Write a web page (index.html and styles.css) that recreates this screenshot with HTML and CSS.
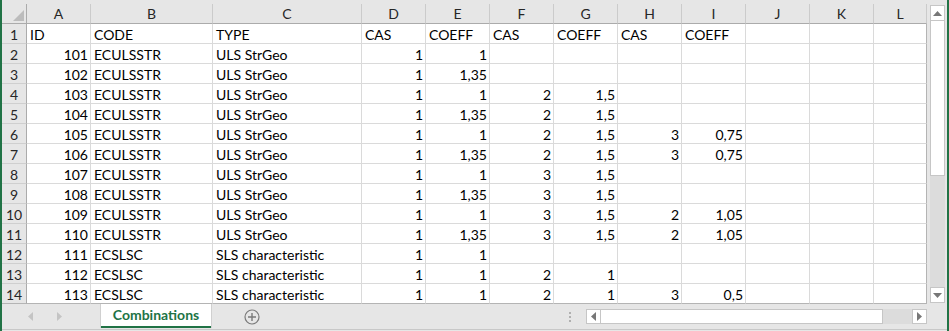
FILE: index.html
```html
<!DOCTYPE html>
<html>
<head>
    <title>Combinations</title>
    <link rel="stylesheet" href="styles.css">
</head>
<body>
<div class="app">
    <div class="main">
        <div class="sheet">
            <div class="row head">
                <div class="corner"><span class="tri"></span></div>
                <div>A</div><div>B</div><div>C</div><div>D</div><div>E</div><div>F</div>
                <div>G</div><div>H</div><div>I</div><div>J</div><div>K</div><div>L</div>
            </div>
            <div class="row"><div class="rh">1</div><div>ID</div><div>CODE</div><div>TYPE</div><div>CAS</div><div>COEFF</div><div>CAS</div><div>COEFF</div><div>CAS</div><div>COEFF</div><div></div><div></div><div></div></div>
            <div class="row"><div class="rh">2</div><div class="n">101</div><div>ECULSSTR</div><div>ULS StrGeo</div><div class="n">1</div><div class="n">1</div><div></div><div></div><div></div><div></div><div></div><div></div><div></div></div>
            <div class="row"><div class="rh">3</div><div class="n">102</div><div>ECULSSTR</div><div>ULS StrGeo</div><div class="n">1</div><div class="n">1,35</div><div></div><div></div><div></div><div></div><div></div><div></div><div></div></div>
            <div class="row"><div class="rh">4</div><div class="n">103</div><div>ECULSSTR</div><div>ULS StrGeo</div><div class="n">1</div><div class="n">1</div><div class="n">2</div><div class="n">1,5</div><div></div><div></div><div></div><div></div><div></div></div>
            <div class="row"><div class="rh">5</div><div class="n">104</div><div>ECULSSTR</div><div>ULS StrGeo</div><div class="n">1</div><div class="n">1,35</div><div class="n">2</div><div class="n">1,5</div><div></div><div></div><div></div><div></div><div></div></div>
            <div class="row"><div class="rh">6</div><div class="n">105</div><div>ECULSSTR</div><div>ULS StrGeo</div><div class="n">1</div><div class="n">1</div><div class="n">2</div><div class="n">1,5</div><div class="n">3</div><div class="n">0,75</div><div></div><div></div><div></div></div>
            <div class="row"><div class="rh">7</div><div class="n">106</div><div>ECULSSTR</div><div>ULS StrGeo</div><div class="n">1</div><div class="n">1,35</div><div class="n">2</div><div class="n">1,5</div><div class="n">3</div><div class="n">0,75</div><div></div><div></div><div></div></div>
            <div class="row"><div class="rh">8</div><div class="n">107</div><div>ECULSSTR</div><div>ULS StrGeo</div><div class="n">1</div><div class="n">1</div><div class="n">3</div><div class="n">1,5</div><div></div><div></div><div></div><div></div><div></div></div>
            <div class="row"><div class="rh">9</div><div class="n">108</div><div>ECULSSTR</div><div>ULS StrGeo</div><div class="n">1</div><div class="n">1,35</div><div class="n">3</div><div class="n">1,5</div><div></div><div></div><div></div><div></div><div></div></div>
            <div class="row"><div class="rh">10</div><div class="n">109</div><div>ECULSSTR</div><div>ULS StrGeo</div><div class="n">1</div><div class="n">1</div><div class="n">3</div><div class="n">1,5</div><div class="n">2</div><div class="n">1,05</div><div></div><div></div><div></div></div>
            <div class="row"><div class="rh">11</div><div class="n">110</div><div>ECULSSTR</div><div>ULS StrGeo</div><div class="n">1</div><div class="n">1,35</div><div class="n">3</div><div class="n">1,5</div><div class="n">2</div><div class="n">1,05</div><div></div><div></div><div></div></div>
            <div class="row"><div class="rh">12</div><div class="n">111</div><div>ECSLSC</div><div>SLS characteristic</div><div class="n">1</div><div class="n">1</div><div></div><div></div><div></div><div></div><div></div><div></div><div></div></div>
            <div class="row"><div class="rh">13</div><div class="n">112</div><div>ECSLSC</div><div>SLS characteristic</div><div class="n">1</div><div class="n">1</div><div class="n">2</div><div class="n">1</div><div></div><div></div><div></div><div></div><div></div></div>
            <div class="row last"><div class="rh">14</div><div class="n">113</div><div>ECSLSC</div><div>SLS characteristic</div><div class="n">1</div><div class="n">1</div><div class="n">2</div><div class="n">1</div><div class="n">3</div><div class="n">0,5</div><div></div><div></div><div></div></div>
        </div>
        <div class="vscroll">
            <div class="sbtn"><svg width="9" height="5" viewBox="0 0 9 5"><path d="M0 5 L4.5 0 L9 5 Z" fill="#777"/></svg></div>
            <div class="vthumb"></div>
            <div class="vtrack"></div>
            <div class="sbtn"><svg width="9" height="5" viewBox="0 0 9 5"><path d="M0 0 L4.5 5 L9 0 Z" fill="#777"/></svg></div>
        </div>
    </div>
    <div class="tabbar">
        <div class="nav">
            <svg width="5" height="9" viewBox="0 0 5 9"><path d="M5 0 L0 4.5 L5 9 Z" fill="#c4c4c4"/></svg>
            <svg width="5" height="9" viewBox="0 0 5 9"><path d="M0 0 L5 4.5 L0 9 Z" fill="#c4c4c4"/></svg>
        </div>
        <div class="tab">Combinations</div>
        <div class="add">
            <svg width="16" height="16" viewBox="0 0 16 16">
                <circle cx="8" cy="8" r="7" fill="none" stroke="#7a7a7a" stroke-width="1.2"/>
                <path d="M8 4 V12 M4 8 H12" stroke="#7a7a7a" stroke-width="1.4"/>
            </svg>
        </div>
        <div class="spacer"></div>
        <div class="dots"><span></span><span></span><span></span></div>
        <div class="hscroll">
            <div class="hbtn"><svg width="5" height="9" viewBox="0 0 5 9"><path d="M5 0 L0 4.5 L5 9 Z" fill="#777"/></svg></div>
            <div class="hthumb"></div>
            <div class="htrack"></div>
            <div class="hbtn"><svg width="5" height="9" viewBox="0 0 5 9"><path d="M0 0 L5 4.5 L0 9 Z" fill="#777"/></svg></div>
        </div>
    </div>
</div>
</body>
</html>
```

FILE: styles.css
```css
body {
    margin: 0;
    font-family: Lato, "Liberation Sans", sans-serif;
    font-size: 14px;
    color: #000;
}

.app {
    width: 949px;
    height: 331px;
    box-sizing: border-box;
    border-left: 2px solid #217346;
    border-right: 2px solid #217346;
    background-color: #e6e6e6;
}

.main {
    display: flex;
    height: 304px;
}

/* Grid of cells */
.sheet {
    width: 925px;
    padding-top: 4px;
    box-sizing: border-box;
}
.row {
    display: grid;
    grid-template-columns: 25px 64px 122px 149px repeat(8, 64px) 53px;
    height: 20px;
}
.row > div {
    box-sizing: border-box;
    background-color: #fff;
    border-right: 1px solid #dadada;
    border-bottom: 1px solid #dadada;
    padding: 1px 3px 0 3px;
    line-height: 19px;
    white-space: nowrap;
    overflow: hidden;
}
.row > div:last-child {
    border-right-color: #b4b4b4;
}
.row.last > div {
    border-bottom-color: #b4b4b4;
}
.row .n {
    text-align: right;
    padding-right: 2px;
}
.row .rh {
    background-color: #e6e6e6;
    border-right-color: #ababab;
    border-bottom-color: #cfcfcf;
    text-align: center;
    padding: 1px 0 0 0;
    color: #262626;
}
.head > div {
    background-color: #e6e6e6;
    border-right-color: #cbcbcb;
    border-bottom-color: #ababab;
    text-align: center;
    color: #262626;
    padding: 0;
}
.head > div:last-child {
    border-right-color: #cbcbcb;
}
.head .corner {
    display: flex;
    justify-content: flex-end;
    align-items: flex-end;
    padding: 0 2px 2px 0;
    border-right-color: #ababab;
}
.corner .tri {
    width: 0;
    height: 0;
    border-left: 11px solid transparent;
    border-bottom: 11px solid #bcbcbc;
}

/* Vertical scrollbar */
.vscroll {
    width: 20px;
    box-sizing: border-box;
    padding: 5px 2px 1px 3px;
    display: flex;
    flex-direction: column;
}
.sbtn, .hbtn {
    background-color: #fff;
    border: 1px solid #c6c6c6;
    box-sizing: border-box;
    display: flex;
    align-items: center;
    justify-content: center;
}
.sbtn {
    height: 16px;
}
.vthumb {
    height: 154px;
    background-color: #fff;
    border: 1px solid #c6c6c6;
    border-top: none;
}
.vtrack {
    flex: 1;
    background-color: #dcdcdc;
}

/* Sheet tabs */
.tabbar {
    display: flex;
    height: 25px;
    border-bottom: 1px solid #c8c8c8;
}
.nav {
    width: 99px;
    display: flex;
    align-items: center;
    gap: 24px;
    padding-left: 26px;
    box-sizing: border-box;
}
.tab {
    width: 110px;
    height: 24px;
    box-sizing: border-box;
    background-color: #fff;
    border-bottom: 2px solid #217346;
    box-shadow: -1px 0 0 #d0d0d0, 1px 0 0 #d0d0d0;
    color: #217346;
    font-weight: bold;
    text-align: center;
    line-height: 22px;
}
.add {
    width: 82px;
    display: flex;
    align-items: center;
    justify-content: center;
}
.spacer {
    flex: 1;
}
.dots {
    width: 16px;
    margin-right: 8px;
    display: flex;
    flex-direction: column;
    align-items: center;
    justify-content: center;
    gap: 2px;
}
.dots span {
    width: 2px;
    height: 2px;
    background-color: #b0b0b0;
}
.hscroll {
    width: 341px;
    height: 15px;
    margin: 5px 20px 0 0;
    display: flex;
}
.hbtn {
    width: 15px;
}
.hthumb {
    width: 281px;
    background-color: #fff;
    border: 1px solid #c6c6c6;
    border-left: none;
}
.htrack {
    flex: 1;
    background-color: #dcdcdc;
}
```
